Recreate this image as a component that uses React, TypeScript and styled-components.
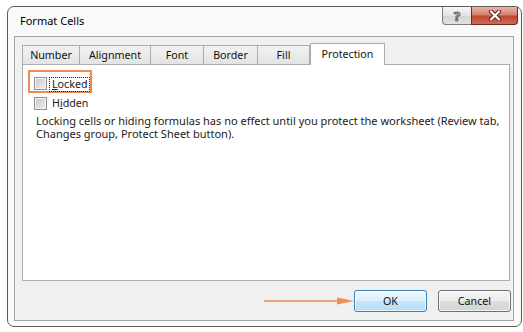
import React from 'react';
import styled, { createGlobalStyle } from 'styled-components';

const GlobalStyle = createGlobalStyle`
  html, body {
    margin: 0;
    padding: 0;
    background: #ffffff;
  }
  body {
    font-family: "Noto Sans", "Open Sans", sans-serif;
    color: #1a1a1a;
  }
`;

const tabs = [
    { label: 'Number', width: 58 },
    { label: 'Alignment', width: 71 },
    { label: 'Font', width: 53 },
    { label: 'Border', width: 54 },
    { label: 'Fill', width: 52 },
    { label: 'Protection', width: 75 },
];

const activeTab = 'Protection';

export default function App() {
    return (
        <>
            <GlobalStyle />
            <Page>
                <Window>
                    <TitleBar>
                        <Title>Format Cells</Title>
                        <CaptionButtons>
                            <HelpButton>?</HelpButton>
                            <CloseButton>
                                <svg width="16" height="11" viewBox="0 0 16 11">
                                    <path d="M4 1.5 L12 9.5 M12 1.5 L4 9.5" stroke="#5b2a22" strokeWidth="4.2" strokeLinecap="round" />
                                    <path d="M4 1.5 L12 9.5 M12 1.5 L4 9.5" stroke="#ffffff" strokeWidth="2.2" strokeLinecap="round" />
                                </svg>
                            </CloseButton>
                        </CaptionButtons>
                    </TitleBar>

                    <Client>
                        <TabRow>
                            {tabs.map(tab => (
                                <Tab key={tab.label} $width={tab.width} $active={tab.label === activeTab}>
                                    {tab.label}
                                </Tab>
                            ))}
                        </TabRow>

                        <Pane>
                            <FocusedOption>
                                <CheckBox />
                                <FocusLabel>
                                    <u>L</u>ocked
                                </FocusLabel>
                            </FocusedOption>
                            <Option>
                                <CheckBox />
                                <span>H<u>i</u>dden</span>
                            </Option>
                            <Description>
                                Locking cells or hiding formulas has no effect until you protect the worksheet (Review tab,
                                <br />
                                Changes group, Protect Sheet button).
                            </Description>
                        </Pane>

                        <ButtonRow>
                            <svg width="90" height="10" viewBox="0 0 90 10">
                                <line x1="0" y1="5" x2="76" y2="5" stroke="#f28a54" strokeWidth="1.6" />
                                <path d="M73 1.6 L90 5 L73 8.4 Z" fill="#f28a54" />
                            </svg>
                            <DialogButton $primary>OK</DialogButton>
                            <DialogButton>Cancel</DialogButton>
                        </ButtonRow>
                    </Client>
                </Window>
            </Page>
        </>
    );
}

const Page = styled.div`
    padding: 6px 0 0 7px;
`

const Window = styled.div`
    box-sizing: border-box;
    width: 515px;
    height: 321px;
    border: 1px solid #5c5c5c;
    border-radius: 7px;
    background: #f9f9fa;
    display: flex;
    flex-direction: column;
`

const TitleBar = styled.div`
    height: 29px;
    display: flex;
    align-items: flex-start;
`

const Title = styled.div`
    margin: 6px 0 0 12px;
    font-size: 11px;
    line-height: 15px;
    color: #000;
`

const CaptionButtons = styled.div`
    margin-left: auto;
    margin-right: 3px;
    display: flex;
`

const HelpButton = styled.div`
    box-sizing: border-box;
    width: 29px;
    height: 18px;
    border: 1px solid #7d7d7d;
    border-top: none;
    border-right: none;
    border-radius: 0 0 0 4px;
    background: linear-gradient(#f6f6f6, #e4e4e4 50%, #d4d4d4 51%, #e2e2e2);
    display: flex;
    justify-content: center;
    align-items: center;
    font-size: 13px;
    font-weight: 700;
    color: #f2f2f2;
    -webkit-text-stroke: 1px #5c5c5c;
`

const CloseButton = styled.div`
    box-sizing: border-box;
    width: 47px;
    height: 18px;
    border: 1px solid #6b2b22;
    border-top: none;
    border-radius: 0 0 4px 0;
    background: linear-gradient(#eab3a7, #d7826f 45%, #c4452f 55%, #d06a52);
    display: flex;
    justify-content: center;
    align-items: center;
`

const Client = styled.div`
    flex: 1;
    margin: 0 7px 5px 6px;
    border: 1px solid #a3a3a3;
    background: #f0f0f0;
    padding: 6px 3px 0 7px;
    display: flex;
    flex-direction: column;
`

const TabRow = styled.div`
    height: 21px;
    display: flex;
    align-items: flex-end;
`

const Tab = styled.div<{ $width: number; $active?: boolean }>`
    box-sizing: border-box;
    position: relative;
    width: ${p => p.$width}px;
    height: ${p => (p.$active ? 22 : 19)}px;
    margin-bottom: ${p => (p.$active ? -1 : 0)}px;
    z-index: ${p => (p.$active ? 1 : 0)};
    border: 1px solid #acacac;
    border-bottom: none;
    border-left-width: ${p => (p.$active ? 1 : 0)}px;
    background: ${p => (p.$active ? '#ffffff' : 'linear-gradient(#f2f2f2, #e3e3e3)')};
    display: flex;
    justify-content: center;
    align-items: center;
    padding-bottom: ${p => (p.$active ? 2 : 0)}px;
    font-size: 10.7px;
    color: #111;

    &:first-child {
        border-left-width: 1px;
    }
`

const Pane = styled.div`
    box-sizing: border-box;
    height: 217px;
    border: 1px solid #adadad;
    background: #ffffff;
    padding: 5px 0 0 5px;
    display: flex;
    flex-direction: column;
    align-items: flex-start;
    font-size: 10.7px;
`

const FocusedOption = styled.div`
    box-sizing: border-box;
    width: 64px;
    height: 23px;
    border: 2px solid #ef8b52;
    padding: 0 0 0 4px;
    display: flex;
    align-items: flex-end;
    gap: 2px;
`

const CheckBox = styled.span`
    box-sizing: border-box;
    flex: none;
    width: 13px;
    height: 13px;
    margin-bottom: 1px;
    border: 1px solid #8e8f8f;
    box-shadow: inset 0 0 0 1px #f4f4f4;
    background: linear-gradient(135deg, #c9c9c9, #efefef);
`

const FocusLabel = styled.span`
    box-sizing: border-box;
    height: 15px;
    margin-bottom: -1px;
    padding: 0 1px 0 2px;
    border: 1px dotted #222;
    line-height: 13px;
`

const Option = styled.div`
    margin: 4px 0 0 6px;
    height: 13px;
    display: flex;
    align-items: center;
    gap: 5px;
    line-height: 13px;

    ${CheckBox} {
        margin-bottom: 0;
    }
`

const Description = styled.div`
    margin: 4px 0 0 8px;
    font-size: 11px;
    line-height: 13px;
    white-space: nowrap;
`

const ButtonRow = styled.div`
    margin: 9px -1px 0 0;
    height: 22px;
    display: flex;
    justify-content: flex-end;
    align-items: center;
`

const DialogButton = styled.div<{ $primary?: boolean }>`
    box-sizing: border-box;
    width: 73px;
    height: 22px;
    margin-left: ${p => (p.$primary ? 0 : 11)}px;
    border: 1px solid ${p => (p.$primary ? '#3c7fb1' : '#707070')};
    border-radius: 3px;
    background: ${p =>
        p.$primary
            ? 'linear-gradient(#ecf6fd, #dcf0fc 50%, #c6e6fb 51%, #b4dcf5)'
            : 'linear-gradient(#f4f4f4, #ebebeb 50%, #dddddd 51%, #d3d3d3)'};
    box-shadow: inset 0 0 0 1px rgba(255, 255, 255, 0.7);
    display: flex;
    justify-content: center;
    align-items: center;
    font-size: 10.7px;
    color: #111;
`
